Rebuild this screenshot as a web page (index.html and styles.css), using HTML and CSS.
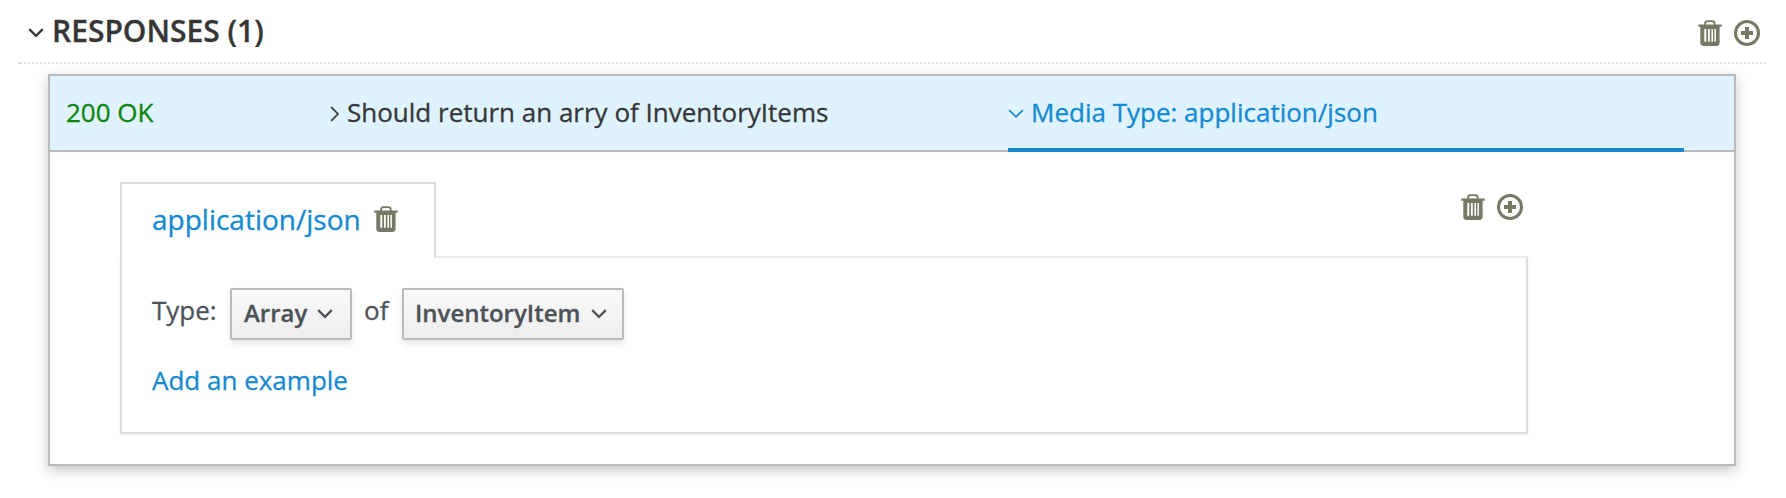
FILE: index.html
```html
<!DOCTYPE html>
<html lang="en">
<head>
<meta charset="utf-8">
<title>Responses</title>
<link rel="stylesheet" href="styles.css">
</head>
<body>
<svg width="0" height="0" class="defs">
  <symbol id="trash" viewBox="0 0 24 26">
    <path fill-rule="evenodd" d="M0.3 4.4H6.2V3.6Q6.2 0.3 9.4 0.3H14.4Q17.6 0.3 17.6 3.6V4.4H23.7V6.8H21.6V22.6Q21.6 26 18.2 26H5.6Q2.3 26 2.3 22.6V6.8H0.3ZM8 4.4H15.8V3.7Q15.8 1.9 14 1.9H9.8Q8 1.9 8 3.7ZM6.3 9V21.8H8.3V9ZM10 9V21.8H11.8V9ZM13.4 9V21.8H15V9ZM16.4 9V21.8H17.9V9Z"/>
  </symbol>
  <symbol id="add" viewBox="0 0 26 26">
    <circle cx="13" cy="13" r="11.5" fill="none" stroke="currentColor" stroke-width="3"/>
    <path d="M11 7h4v4h4v4h-4v4h-4v-4H7v-4h4z"/>
  </symbol>
  <symbol id="down" viewBox="0 0 16 10">
    <path d="M1.2 1.2 8 7.8 14.8 1.2" fill="none" stroke="currentColor"/>
  </symbol>
</svg>
<section class="section">
  <header class="section-head">
    <svg class="chev bold"><use href="#down"/></svg>
    <h2 class="title">RESPONSES (1)</h2>
    <div class="actions">
      <svg class="trash"><use href="#trash"/></svg>
      <svg class="add"><use href="#add"/></svg>
    </div>
  </header>
  <article class="card">
    <div class="row">
      <div class="status">200 OK</div>
      <div class="desc">
        <svg class="chev-right" viewBox="0 0 10 16"><path d="M1.2 1.2 8 8 1.2 14.8" fill="none" stroke="currentColor"/></svg>
        <span class="desc-text">Should return an arry of InventoryItems</span>
      </div>
      <div class="media">
        <svg class="chev"><use href="#down"/></svg>
        <span class="media-text">Media Type: application/json</span>
      </div>
    </div>
    <div class="body">
      <div class="tabs">
        <div class="tab">
          <span class="tab-text">application/json</span>
          <svg class="trash"><use href="#trash"/></svg>
        </div>
        <div class="actions tab-actions">
          <svg class="trash"><use href="#trash"/></svg>
          <svg class="add"><use href="#add"/></svg>
        </div>
      </div>
      <div class="panel">
        <div class="type">
          <span class="type-label">Type:</span>
          <button class="btn btn-array"><span class="array-text">Array</span><svg class="chev bold"><use href="#down"/></svg></button>
          <span class="of">of</span>
          <button class="btn btn-item"><span class="item-text">InventoryItem</span><svg class="chev bold"><use href="#down"/></svg></button>
        </div>
        <a class="example">Add an example</a>
      </div>
    </div>
  </article>
</section>
</body>
</html>
```
FILE: styles.css
```css
* { box-sizing: border-box; }
body {
  margin: 0;
  min-height: 498px;
  background: #fff;
  color: #363636;
  font: 26px/36px "Open Sans", sans-serif;
  white-space: nowrap;
  -webkit-text-stroke: .3px currentColor;
}
svg { display: block; flex: none; fill: currentColor; }
.defs { position: absolute; }
.section { padding: 0 20px 32px 18px; }
.section-head {
  display: flex;
  align-items: flex-start;
  height: 64px;
  padding: 0 6px 0 10px;
  background:
    linear-gradient(#ddd, #ddd) 0 62px / 2px 2px no-repeat,
    repeating-linear-gradient(90deg, transparent 0 2px, #ddd 2px 4px) 0 62px / 100% 2px no-repeat;
}
.section-head .chev { margin-top: 28px; }
.title { margin: 0 0 0 8px; font-size: 30px; line-height: 61px; font-weight: 600; }
.chev { width: 16px; height: 10px; stroke-width: 1.7; }
.chev.bold { stroke-width: 2.3; }
.chev-right { width: 10px; height: 16px; stroke-width: 1.7; }
.actions { display: flex; gap: 12px; margin-left: auto; color: #767963; }
.section-head .actions { padding-top: 20px; }
.trash { width: 24px; height: 26px; color: #767963; }
.add { width: 26px; height: 26px; }

.card {
  width: 1688px;
  height: 392px;
  margin: 10px 0 0 30px;
  border: 2px solid #bbb;
  background: #fff;
  box-shadow: 0 4px 12px rgba(3, 3, 3, .23);
}
.row {
  display: flex;
  height: 76px;
  padding-left: 16px;
  border-bottom: 2px solid #bbb;
  background: #def3ff;
  line-height: 72px;
}
.status { width: 264px; color: #0c850c; }
.desc { display: flex; width: 678px; }
.desc .chev-right { margin: 30px 7px 0 0; }
.media {
  display: flex;
  width: 676px;
  height: 76px;
  border-bottom: 4px solid #1489d0;
  color: #1489d0;
}
.media .chev { margin: 33px 7px 0 0; }

.body { padding: 30px 206px 0 70px; }
.tabs { display: flex; height: 74px; }
.tab {
  position: relative;
  display: flex;
  width: 316px;
  height: 76px;
  padding-left: 30px;
  border: 2px solid #ddd;
  border-bottom: 0;
  background: #fff;
  color: #1489d0;
  font-size: 28px;
  line-height: 70px;
}
.tab-text { width: 222px; }
.tab .trash { margin-top: 22px; }
.tab-actions { padding: 12px 5px 0 0; }
.panel {
  height: 178px;
  padding: 30px;
  border: 2px solid #ddd;
  border-top-color: #ebebeb;
  box-shadow: 0 2px 3px rgba(3, 3, 3, .06);
}
.type { display: flex; height: 52px; color: #4d5258; line-height: 44px; }
.type-label { width: 78px; }
.btn {
  display: flex;
  height: 52px;
  margin: 0;
  padding: 0 0 0 11px;
  border: 2px solid #bbb;
  border-radius: 2px;
  background: linear-gradient(#fafafa, #ededed);
  box-shadow: 0 4px 6px rgba(3, 3, 3, .1);
  color: #4d5258;
  font: 600 24px/46px "Open Sans", sans-serif;
}
.btn .chev { margin-top: 19px; }
.btn-array { width: 122px; padding-left: 12px; }
.array-text { width: 73px; text-align: left; }
.of { width: 50px; padding-left: 12px; }
.btn-item { width: 222px; }
.item-text { width: 176px; text-align: left; }
.example { display: block; margin-top: 22px; color: #1489d0; }
```
